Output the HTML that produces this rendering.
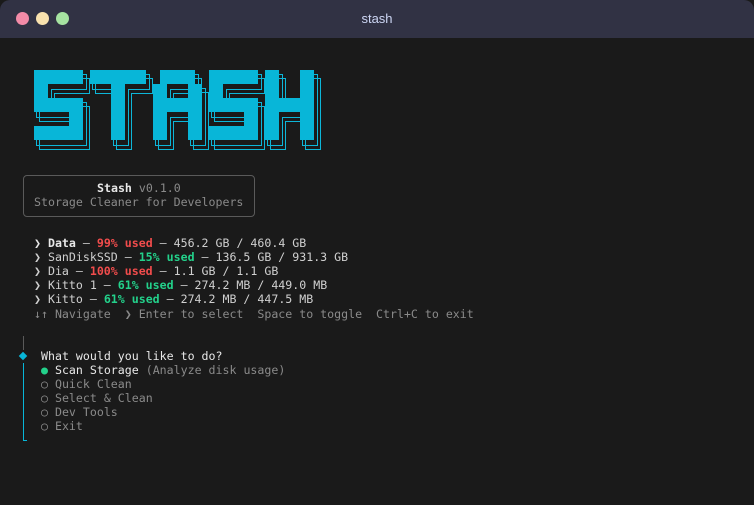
<!DOCTYPE html>
<html><head><meta charset="utf-8"><style>
*{margin:0;padding:0;box-sizing:border-box}
body{width:754px;height:505px;background:#1a1a1a;overflow:hidden;font-family:"DejaVu Sans Mono","Liberation Mono",monospace;font-size:11.6px;color:#d0d0d0}
.win{position:absolute;left:0;top:0;width:754px;height:505px;background:#1a1a1a;border-radius:10px;overflow:hidden}
.tb{position:absolute;left:0;top:0;width:754px;height:38px;background:#313244}
.dot{position:absolute;top:12px;width:13px;height:13px;border-radius:50%}
.title{position:absolute;top:11px;left:0;width:754px;text-align:center;font-family:"Liberation Sans",sans-serif;font-size:13px;color:#cdd6f4}
.l{position:absolute;white-space:pre;line-height:14px;height:14px}
.b{font-weight:bold}.g{color:#8a8a8a}.r{color:#f14c4c;font-weight:bold}.gr{color:#23d18b;font-weight:bold}.w{color:#e8e8e8}
.box{position:absolute;left:23px;top:175px;width:232px;height:42px;border:1px solid #5a5a5a;border-radius:4px}
</style></head><body><div class="win">
<div class="tb"></div>
<div class="dot" style="left:16px;background:#f38ba8"></div>
<div class="dot" style="left:36px;background:#f9e2af"></div>
<div class="dot" style="left:56px;background:#a6e3a1"></div>
<div class="title">stash</div>

<svg style="position:absolute;left:0;top:0" width="754" height="170">
<defs>
<g id="L">
<rect x="34" y="70" width="49" height="14"/><rect x="34" y="84" width="14" height="14"/><rect x="34" y="98" width="49" height="14"/><rect x="69" y="112" width="14" height="14"/><rect x="34" y="126" width="49" height="14"/>
<rect x="90" y="70" width="56" height="14"/><rect x="111" y="84" width="14" height="56"/>
<rect x="160" y="70" width="35" height="14"/><rect x="153" y="84" width="14" height="56"/><rect x="188" y="84" width="14" height="56"/><rect x="153" y="98" width="49" height="14"/>
<rect x="209" y="70" width="49" height="14"/><rect x="209" y="84" width="14" height="14"/><rect x="209" y="98" width="49" height="14"/><rect x="244" y="112" width="14" height="14"/><rect x="209" y="126" width="49" height="14"/>
<rect x="265" y="70" width="14" height="70"/><rect x="300" y="70" width="14" height="70"/><rect x="265" y="98" width="49" height="14"/>
</g>
<filter id="sh" x="-10%" y="-10%" width="130%" height="140%">
<feFlood flood-color="#08b6d8" result="c"/>
<feOffset in="SourceAlpha" dx="3" dy="5" result="o1"/>
<feMorphology in="o1" operator="dilate" radius="1" result="d1"/>
<feComposite in="d1" in2="o1" operator="out" result="r1"/>
<feOffset in="SourceAlpha" dx="6" dy="9" result="o2"/>
<feMorphology in="o2" operator="dilate" radius="1" result="d2"/>
<feComposite in="d2" in2="o2" operator="out" result="r2"/>
<feMerge result="m"><feMergeNode in="r1"/><feMergeNode in="r2"/></feMerge>
<feComposite in="c" in2="m" operator="in"/>
</filter>
</defs>
<g fill="#08b6d8" filter="url(#sh)"><use href="#L"/></g>
<g fill="#08b6d8"><use href="#L"/></g>
</svg>

<div class="box"></div>
<div class="l" style="left:97px;top:181px"><span class="b w">Stash</span><span class="g"> v0.1.0</span></div>
<div class="l g" style="left:34px;top:195px">Storage Cleaner for Developers</div>

<div class="l" style="left:34px;top:236px"><span class="b w">❯ Data</span> — <span class="r">99% used</span> — 456.2 GB / 460.4 GB</div>
<div class="l" style="left:34px;top:250px">❯ SanDiskSSD — <span class="gr">15% used</span> — 136.5 GB / 931.3 GB</div>
<div class="l" style="left:34px;top:264px">❯ Dia — <span class="r">100% used</span> — 1.1 GB / 1.1 GB</div>
<div class="l" style="left:34px;top:278px">❯ Kitto 1 — <span class="gr">61% used</span> — 274.2 MB / 449.0 MB</div>
<div class="l" style="left:34px;top:292px">❯ Kitto — <span class="gr">61% used</span> — 274.2 MB / 447.5 MB</div>
<div class="l g" style="left:34px;top:307px">↓↑ Navigate  ❯ Enter to select  Space to toggle  Ctrl+C to exit</div>

<div style="position:absolute;left:23px;top:336px;width:1px;height:14px;background:#5a5a5a"></div>
<div style="position:absolute;left:20px;top:353px;width:6px;height:6px;background:#08b6d8;transform:rotate(45deg)"></div>
<div style="position:absolute;left:23px;top:363px;width:1px;height:78px;background:#08b6d8"></div>
<div style="position:absolute;left:23px;top:440px;width:4px;height:1px;background:#08b6d8"></div>

<div class="l w" style="left:41px;top:349px">What would you like to do?</div>
<div class="l" style="left:41px;top:363px"><span style="color:#23d18b">●</span> <span class="w">Scan Storage</span> <span class="g">(Analyze disk usage)</span></div>
<div class="l g" style="left:41px;top:377px">○ Quick Clean</div>
<div class="l g" style="left:41px;top:391px">○ Select &amp; Clean</div>
<div class="l g" style="left:41px;top:405px">○ Dev Tools</div>
<div class="l g" style="left:41px;top:419px">○ Exit</div>
</div></body></html>
